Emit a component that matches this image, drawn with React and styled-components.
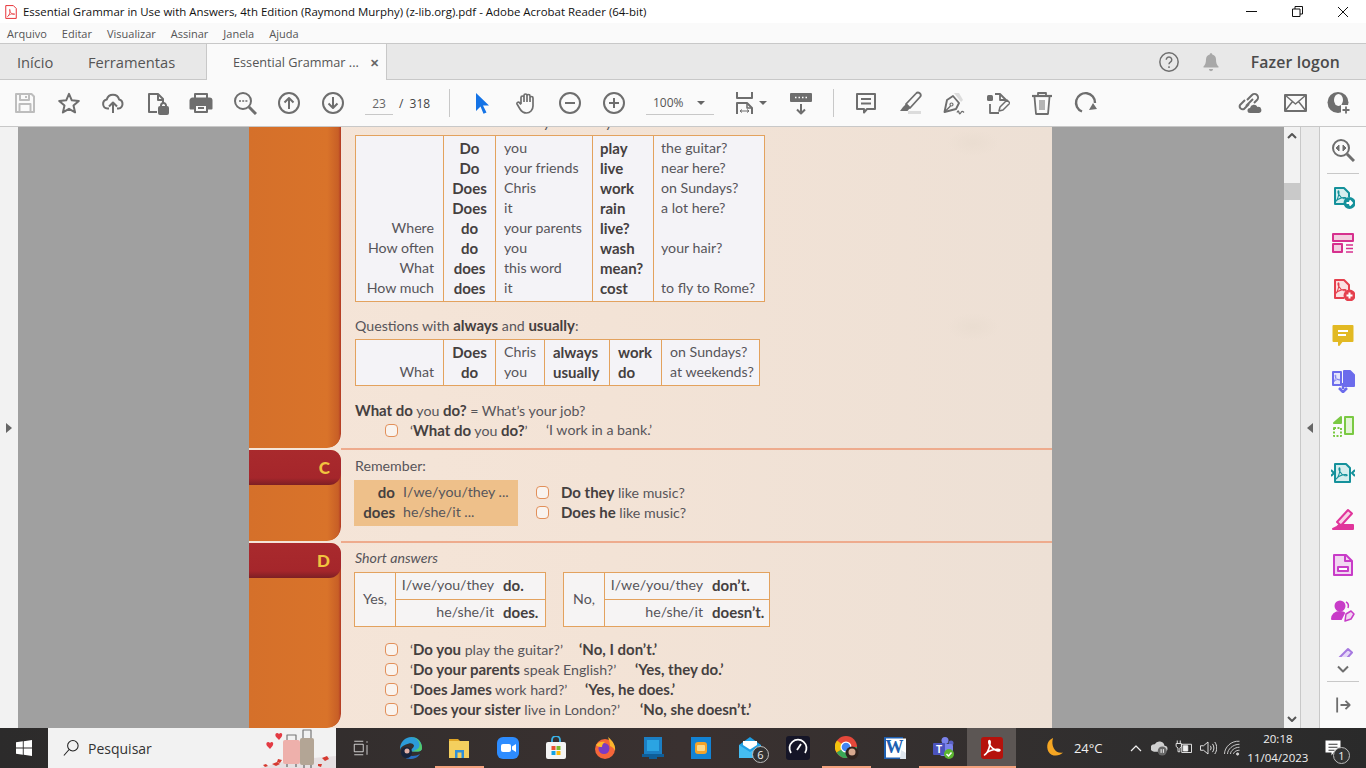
import styled, { createGlobalStyle } from 'styled-components';

const GlobalStyle = createGlobalStyle`
	html, body {
		margin: 0;
		height: 100%;
		overflow: hidden;
		font-family: 'Open Sans', 'Liberation Sans', sans-serif;
	}
`;

const Shell = styled.div`
	display: flex;
	flex-direction: column;
	width: 1366px;
	height: 768px;
	overflow: hidden;
`;

const Glyph = styled.svg.attrs((p) => ({
	viewBox: p.$box || '0 0 24 24',
	width: p.$size || 24,
	height: p.$h || p.$size || 24,
}))`
	display: block;
	flex: none;
	fill: none;
	stroke: ${(p) => p.$color || '#6e6e6e'};
	stroke-width: ${(p) => p.$sw ?? 2};
	stroke-linejoin: round;
	margin-left: ${(p) => p.$ml || 0}px;
`;

/* title + menu */
const TitleBar = styled.div`
	display: flex;
	align-items: center;
	height: 23px;
	background: #fff;
	padding-left: 4px;
	font-size: 11.45px;
	color: #111;
`;
const TitleText = styled.span`
	margin-left: 5px;
	flex: 1;
`;
const WinButton = styled.div`
	display: flex;
	align-items: center;
	justify-content: center;
	width: 46px;
`;
const MenuBar = styled.div`
	display: flex;
	align-items: center;
	gap: 15px;
	height: 20px;
	padding-left: 7px;
	background: #fafafa;
	border-bottom: 1px solid #c8c8c8;
	font-size: 11px;
	color: #555;
`;

/* tabs */
const TabBar = styled.div`
	display: flex;
	align-items: center;
	height: 35px;
	background: #e8e8e8;
	border-bottom: 1px solid #c8c8c8;
	color: #555;
	font-size: 14.7px;
`;
const TopTab = styled.div`
	box-sizing: border-box;
	width: ${(p) => p.$w}px;
	padding-left: ${(p) => p.$pad}px;
`;
const ActiveTab = styled.div`
	display: flex;
	align-items: center;
	justify-content: space-between;
	box-sizing: border-box;
	width: 181px;
	height: 36px;
	margin-bottom: -1px;
	padding: 0 7px 0 26px;
	background: #fafafa;
	border-left: 1px solid #c8c8c8;
	border-right: 1px solid #c8c8c8;
	font-size: 12.7px;
`;
const CloseX = styled.span`
	font-size: 11px;
	font-weight: 700;
	color: #666;
`;
const TabRight = styled.div`
	display: flex;
	align-items: center;
	margin-left: auto;
	padding-right: 26px;
`;
const Login = styled.span`
	margin-left: 30px;
	font-size: 15.8px;
	font-weight: 600;
	letter-spacing: 0.15px;
	color: #4b4b4b;
`;

/* toolbar */
const ToolBar = styled.div`
	display: flex;
	align-items: center;
	height: 46px;
	padding-left: 3px;
	background: #fafafa;
	border-bottom: 1px solid #c8c8c8;
`;
const Tool = styled.div`
	display: flex;
	align-items: center;
	justify-content: center;
	width: 44px;
	height: 46px;
	flex: none;
	margin-left: ${(p) => p.$ml || 0}px;
`;
const PageBox = styled.div`
	display: flex;
	align-items: center;
	width: 94px;
	padding-left: 10px;
	box-sizing: border-box;
	font-size: 12px;
	color: #444;
`;
const PageInput = styled.span`
	box-sizing: border-box;
	width: 28px;
	height: 24px;
	line-height: 25px;
	text-align: center;
	border-bottom: 1px solid #c8c8c8;
	color: #666;
`;
const PageTotal = styled.span`
	margin-left: 6px;
	word-spacing: 3px;
`;
const ToolSep = styled.div`
	width: 1px;
	height: 28px;
	background: #c8c8c8;
	margin: 0 10px 0 ${(p) => p.$l}px;
	flex: none;
`;
const ZoomSelect = styled.div`
	display: flex;
	align-items: center;
	justify-content: space-between;
	box-sizing: border-box;
	width: 68px;
	height: 24px;
	margin-left: 10px;
	padding: 0 9px 0 7px;
	border-bottom: 1px solid #c8c8c8;
	font-size: 12px;
	color: #555;
`;
const Caret = styled.i`
	width: 0;
	height: 0;
	border-left: 4px solid transparent;
	border-right: 4px solid transparent;
	border-top: 4px solid #666;
	margin-left: ${(p) => p.$ml || 0}px;
`;

/* viewer */
const Workspace = styled.div`
	display: flex;
	flex: 1;
	min-height: 0;
`;
const LeftStrip = styled.div`
	display: flex;
	align-items: center;
	justify-content: center;
	width: 18px;
	background: #f2f2f2;
	flex: none;
`;
const Arrow = styled.i`
	width: 0;
	height: 0;
	border-top: 5px solid transparent;
	border-bottom: 5px solid transparent;
	${(p) => (p.$left ? 'border-right: 6px solid #666;' : 'border-left: 6px solid #666;')}
`;
const Viewer = styled.div`
	width: 1266px;
	background: #a0a0a0;
	padding-left: 231px;
	box-sizing: border-box;
	flex: none;
`;
const Page = styled.div`
	width: 803px;
	height: 601px;
	overflow: hidden;
	font-family: Lato, 'Open Sans', sans-serif;
	font-size: 14.2px;
	line-height: 20px;
	color: #57555a;
	background:
		radial-gradient(26px 13px at 724px 16px, #eaddd1, transparent),
		radial-gradient(26px 14px at 724px 200px, #eaddd1, transparent),
		linear-gradient(90deg, #f5e5d8 0%, #f3e3d6 45%, #ede0d5 100%);
	b {
		font-size: 15px;
		font-weight: 700;
		color: #45403f;
	}
`;
const Section = styled.div`
	display: flex;
	height: ${(p) => p.$h}px;
`;
const sideFill = 'linear-gradient(90deg, #d5702a 0%, #d9732a 85%, #c85f26 97%, #b23a24 100%)';
const Side = styled.div`
	display: flex;
	flex-direction: column;
	width: 92px;
	flex: none;
	padding-top: ${(p) => (p.$tabbed ? 2 : 0)}px;
	box-sizing: border-box;
	border-radius: 0 0 14px 0;
	overflow: hidden;
`;
const SideFill = styled.div`
	flex: 1;
	background: ${sideFill};
	border-radius: 0 0 14px 0;
`;
const SideHead = styled.div`
	background: ${sideFill};
	border-radius: 0 11px 0 0;
`;
const SideTab = styled.div`
	display: flex;
	align-items: center;
	justify-content: flex-end;
	height: 35px;
	padding-right: 11px;
	box-sizing: border-box;
	background: linear-gradient(180deg, #a92a2d 0%, #a5262b 80%, #7d1f24 100%);
	border-radius: 0 10px 12px 0;
	font-size: 17px;
	font-weight: 900;
	color: #f1c33f;
`;
const Body = styled.div`
	flex: 1;
	padding: ${(p) => p.$top}px 0 0 14px;
	${(p) => p.$rule && 'border-top: 2px solid #eeab8d;'}
`;
const ClipLine = styled.div`
	position: relative;
	height: 8px;
	overflow: hidden;
`;
const Tail = styled.span`
	position: absolute;
	top: -14px;
	left: ${(p) => p.$x}px;
`;
const Table = styled.div`
	display: grid;
	grid-template-columns: ${(p) => p.$cols};
	width: max-content;
	margin-top: ${(p) => p.$mt || 0}px;
	background: #f4f3f7;
	border: 1px solid #e3a25e;
`;
const Col = styled.div`
	padding: 2px ${(p) => p.$pr || 0}px 3px ${(p) => p.$pl || 0}px;
	text-align: ${(p) => p.$align || 'left'};
	border-left: ${(p) => (p.$first ? 'none' : '1px solid #e3a25e')};
	font-weight: ${(p) => (p.$bold ? 700 : 400)};
	font-size: ${(p) => (p.$bold ? '15px' : 'inherit')};
	color: ${(p) => (p.$bold ? '#45403f' : '#57555a')};
`;
const Line = styled.div`
	height: 20px;
	white-space: nowrap;
	margin-top: ${(p) => p.$mt || 0}px;
`;
const Example = styled.div`
	display: flex;
	align-items: center;
	height: 20px;
	white-space: nowrap;
	padding-left: ${(p) => p.$indent || 0}px;
`;
const Check = styled.i`
	box-sizing: border-box;
	width: 13px;
	height: 13px;
	border: 1px solid #e2905a;
	border-radius: 4px;
	background: #f9f3ee;
	margin-right: 12px;
	flex: none;
`;
const Ask = styled.span`
	display: inline-block;
	width: ${(p) => p.$w}px;
	flex: none;
`;
const RememberRow = styled.div`
	display: flex;
	gap: 18px;
	margin: 4px 0 0 -1px;
`;
const Highlight = styled.div`
	display: grid;
	grid-template-columns: 41px auto;
	grid-auto-rows: 20px;
	column-gap: 8px;
	box-sizing: border-box;
	width: 164px;
	height: 46px;
	padding-top: 2px;
	background: #eec08a;
`;
const HighlightKey = styled.b`
	text-align: right;
`;
const CheckList = styled.div`
	padding-top: 2px;
`;
const AnswerRow = styled.div`
	display: flex;
	gap: 17px;
	margin: 4px 0 12px -1px;
`;
const AnswerBox = styled.div`
	display: flex;
	box-sizing: border-box;
	width: ${(p) => p.$w}px;
	height: 55px;
	background: #f6f4f4;
	border: 1px solid #e3a25e;
`;
const AnswerLabel = styled.div`
	display: flex;
	align-items: center;
	justify-content: center;
	width: 40px;
	padding-bottom: 2px;
	border-right: 1px solid #e3a25e;
	flex: none;
`;
const AnswerRows = styled.div`
	flex: 1;
	display: flex;
	flex-direction: column;
`;
const AnswerLine = styled.div`
	display: flex;
	align-items: center;
	flex: 1;
	padding-bottom: 2px;
	${(p) => p.$rule && 'border-top: 1px solid #e3a25e;'}
`;
const Pronoun = styled.span`
	width: 98px;
	text-align: right;
	margin-right: 9px;
`;

/* scroll + rail */
const ScrollBar = styled.div`
	display: flex;
	flex-direction: column;
	align-items: center;
	justify-content: space-between;
	position: relative;
	box-sizing: border-box;
	width: 17px;
	padding: 4px 0;
	background: #f2f2f2;
	border-right: 1px solid #c8c8c8;
	flex: none;
`;
const Thumb = styled.div`
	position: absolute;
	top: 56px;
	left: 0;
	width: 16px;
	height: 17px;
	background: #c9c9c9;
`;
const RightStrip = styled.div`
	display: flex;
	align-items: center;
	justify-content: center;
	box-sizing: border-box;
	width: 19px;
	background: #ebebeb;
	border-right: 1px solid #c8c8c8;
	flex: none;
`;
const Rail = styled.div`
	display: flex;
	flex-direction: column;
	flex: 1;
	background: #fafafa;
`;
const RailItem = styled.div`
	display: flex;
	align-items: center;
	justify-content: center;
	height: ${(p) => p.$h || 46}px;
	flex: none;
`;
const RailSep = styled.div`
	height: 1px;
	margin: 0 7px;
	background: #c8c8c8;
	flex: none;
`;
const RailList = styled.div`
	height: 483px;
	overflow: hidden;
	flex: none;
`;

/* taskbar */
const TaskBar = styled.div`
	display: flex;
	align-items: stretch;
	height: 40px;
	background: linear-gradient(90deg, #2c2b2b 0%, #3a3130 50%, #2f2e2e 85%, #2a2a2a 100%);
	color: #f0f0f0;
	flex: none;
`;
const StartButton = styled.div`
	display: flex;
	align-items: center;
	justify-content: center;
	width: 48px;
	flex: none;
`;
const SearchBox = styled.div`
	position: relative;
	display: flex;
	align-items: center;
	box-sizing: border-box;
	width: 288px;
	padding-left: 14px;
	background: #f2f2f2;
	font-size: 14px;
	color: #333;
	flex: none;
`;
const SearchLabel = styled.span`
	margin-left: 8px;
`;
const SearchArt = styled.div`
	position: absolute;
	right: 0;
	bottom: 0;
`;
const TaskCell = styled.div`
	position: relative;
	display: flex;
	align-items: center;
	justify-content: center;
	width: ${(p) => p.$w || 48.4}px;
	flex: none;
	background: ${(p) => (p.$active ? '#5c5654' : 'transparent')};
	${(p) => p.$open && 'box-shadow: inset 0 -2px 0 #f4a27e;'}
`;
const Badge = styled.span`
	position: absolute;
	right: ${(p) => p.$r || 5}px;
	bottom: ${(p) => p.$b || 5}px;
	display: flex;
	align-items: center;
	justify-content: center;
	box-sizing: border-box;
	width: 17px;
	height: 17px;
	border: 1px solid #bbb;
	border-radius: 50%;
	background: #333;
	font-size: 11px;
	color: #eee;
`;
const Weather = styled.div`
	display: flex;
	align-items: center;
	box-sizing: border-box;
	width: 108px;
	padding-left: 27px;
	gap: 9px;
	font-size: 13px;
	flex: none;
`;
const TrayIcon = styled.div`
	display: flex;
	align-items: center;
	justify-content: center;
	width: 24px;
	flex: none;
`;
const Clock = styled.div`
	display: flex;
	flex-direction: column;
	align-items: center;
	justify-content: center;
	width: 68px;
	font-size: 11.5px;
	line-height: 19px;
	flex: none;
`;

const Pdf = ({ color = '#e5404e', t = '' }) => (
	<path d="M6 19c2-1 3.6-5 4.4-9 .3-2 .1-3.5-.5-3.5s-.8 1.8.1 3.5 3.5 4.5 6 5.2c1.3.3 2.5.1 2.5-.6s-2.6-.9-5.2-.3-5.3 1.8-7.3 4.7z" stroke={color} strokeWidth="1.2" transform={t} />
);

const Star = () => <Glyph><path d="M12 2.8l2.8 6.5 7 .6-5.3 4.6 1.6 6.9-6.1-3.6-6.1 3.6 1.6-6.9-5.3-4.6 7-.6z" /></Glyph>;
const toolsLeft = [
	<Glyph $color="#bdbdbd"><path d="M3 3h15.5L21 5.5V21H3z" /><path d="M7 3v6h9V3M13 5v2M6.5 21v-8h11v8" /></Glyph>,
	<Star />,
	<Glyph><path d="M8 17.5H6.5a4.6 4.6 0 0 1-.7-9.1 6.4 6.4 0 0 1 12.3.1 4.6 4.6 0 0 1-.6 9H16" /><path d="M12 22v-10M8 15.5l4-4 4 4" /></Glyph>,
	<Glyph><path d="M12 21H4V3h9l5 5v4M13 3v6h5" /><rect x="14" y="16" width="9" height="7" rx="1" fill="#6e6e6e" /><path d="M16 16v-1.5a2.5 2.5 0 0 1 5 0V16" /></Glyph>,
	<Glyph><path d="M6 8V3h12v5" /><path d="M3.5 7.5h17a2 2 0 0 1 2 2v8H18V14H6v3.5H1.5v-8a2 2 0 0 1 2-2z" fill="#6e6e6e" /><path d="M6 14h12v7H6zM9 17h6" /></Glyph>,
	<Glyph><circle cx="10" cy="10" r="8" /><path d="M16 16l7 7" strokeWidth="3" /><path d="M6 10h2M9.2 10h2M12.4 10h2" strokeWidth="1.5" /></Glyph>,
	<Glyph><circle cx="12" cy="12" r="10" /><path d="M12 18V7M7.5 11.5L12 7l4.5 4.5" /></Glyph>,
	<Glyph><circle cx="12" cy="12" r="10" /><path d="M12 6v11M7.5 12.5L12 17l4.5-4.5" /></Glyph>,
];

const railIcons = [
	<Glyph $color="#14919b"><path d="M15 19H4V3h9l5 5v4" fill="#d6eeee" /><Pdf color="#14919b" t="translate(-1.5 0) scale(.9)" /><circle cx="18.5" cy="18" r="5" fill="#14919b" /><path d="M15.5 18h5M18.5 15.5l2.5 2.5-2.5 2.5" stroke="#fff" /></Glyph>,
	<Glyph $color="#d6308e"><rect x="2" y="3" width="20" height="7" fill="#f3cfe0" /><rect x="2" y="13" width="9" height="8" fill="#f3cfe0" /><path d="M15 14h7M15 17.5h7M15 21h7" strokeWidth="1.5" /></Glyph>,
	<Glyph $color="#e5404e"><path d="M13 21H4V3h9l5 5v5" fill="#fbe0e2" /><Pdf color="#e5404e" t="translate(-1.5 0) scale(.9)" /><circle cx="18.5" cy="18.5" r="5" fill="#e5404e" /><path d="M15.5 18.5h6M18.5 15.5v6" stroke="#fff" /></Glyph>,
	<Glyph $color="#e2b923"><path d="M2.5 3h19v15H11l-3 4v-4H2.5z" fill="#e2b923" /><path d="M7 8h10M7 12h8" stroke="#fff" /></Glyph>,
	<Glyph $color="#6c6cec"><path d="M10 3H2v13h8z" fill="#e6e6fb" /><Pdf color="#6c6cec" t="translate(-1.5 2) scale(.6)" /><path d="M13 2h6l4 4v11H13z" fill="#6c6cec" /><path d="M12 14v6M8 19l4 4 4-4" strokeWidth="2.5" /></Glyph>,
	<Glyph $color="#7ac943"><path d="M14 2h8v17h-8z" fill="#e3f5d6" /><path d="M3 13h7v8H3z" strokeDasharray="2 1.5" /><path d="M10 2L3 8h7z" fill="#7ac943" /></Glyph>,
	<Glyph $color="#14919b"><path d="M4 3h11l4 4v14H4z" fill="#d6eeee" /><Pdf color="#14919b" t="translate(-.5 1) scale(.9)" /><path d="M0 9l3 3-3 3M24 9l-3 3 3 3" /></Glyph>,
	<Glyph $color="#e0359b"><path d="M6 15L17 3l4 3.5L10 18.5z" fill="#f8d3e6" /><path d="M2 22l4-2 2-2h14v4z" fill="#e0359b" /></Glyph>,
	<Glyph $color="#c83cc8"><path d="M3 2h12l6 6v14H3z" fill="#f1d6f1" /><path d="M7 14h10v4H7z" fill="#fff" /><path d="M14 2v6h7" /></Glyph>,
	<Glyph $color="#c83cc8"><circle cx="9" cy="7" r="4.5" fill="#c83cc8" /><path d="M1 20c0-4 3-7 8-7 2 0 3 .5 4 1l-3 6z" fill="#c83cc8" /><path d="M14 22l1-7 5-3 3 3-3 5z" fill="#f1d6f1" strokeWidth="1.5" /><path d="M15 3c2 1 3 3 2 6" strokeWidth="1.5" /></Glyph>,
	<Glyph $color="#a679e0"><path d="M5 16L17 4l4 3.5L10 20z" fill="#e6d8f8" /></Glyph>,
];

const tasks = [
	{ key: 'edge', icon: <Glyph $sw={0}><path d="M1 13C1 6 6 1 12.5 1 18.5 1 23 5.5 23 12c0 2-1.5 3.5-4 3.5h-7c0-3 3-3.5 3-6-1-2-3-2.5-5-2-4 1-9 3-9 7.5z" fill="#2c9cd8" /><path d="M23 12C23 6 18 1 12.5 1c5 1 8 4 8 8 0 3-2 5-8.5 6.5h7c2.5 0 4-1.5 4-3.5z" fill="#52cc6c" /><path d="M7 22.5c6 1.5 12-.5 14-4.5-3 2-8 2.5-11 1.5z" fill="#2a6fc0" /><circle cx="7.5" cy="16.5" r="5.5" fill="#18233a" /><circle cx="8" cy="15" r="2.5" fill="#e0b0a6" /></Glyph> },
	{ key: 'files', open: true, icon: <Glyph $sw={0}><path d="M2 3h9l2 2H2z" fill="#e0a526" /><rect x="2" y="5" width="20" height="17" fill="#f4cf5e" /><rect x="8" y="14" width="9" height="8" fill="#2f8fd8" /><rect x="10.5" y="16.5" width="4" height="5.5" fill="#f4cf5e" /></Glyph> },
	{ key: 'zoom', icon: <Glyph $sw={0}><rect x="1" y="1" width="22" height="22" rx="6" fill="#2d8cff" /><rect x="5" y="8" width="10" height="8" rx="2" fill="#fff" /><path d="M16 10.5L20 8v8l-4-2.5z" fill="#fff" /></Glyph> },
	{ key: 'store', icon: <Glyph $sw={0}><path d="M8 6V4a4 4 0 0 1 8 0v2" stroke="#39b1e6" strokeWidth="1.8" /><rect x="2" y="6" width="20" height="17" rx="2" fill="#f4f4f4" /><rect x="7.5" y="10" width="4" height="4" fill="#e8512f" /><rect x="12.5" y="10" width="4" height="4" fill="#7cbb2d" /><rect x="7.5" y="15" width="4" height="4" fill="#12a3e6" /><rect x="12.5" y="15" width="4" height="4" fill="#f9b90c" /></Glyph> },
	{ key: 'firefox', icon: <Glyph $sw={0}><circle cx="12" cy="13" r="10" fill="#f5663a" /><path d="M15 1c5 4 8 9 7 14-1-3-3-4-5-5 0-3-1-6-2-9z" fill="#fbb62d" /><circle cx="11" cy="12.5" r="5.5" fill="#7b3bc4" /><path d="M3 9c2-3 6-4 9-3-2 1-3 3-3 5-2 0-4 0-6-2z" fill="#fbb62d" /></Glyph> },
	{ key: 'tablet', icon: <Glyph $sw={0}><rect x="3" y="1" width="18" height="19" fill="#1b7fc4" /><rect x="6" y="4" width="12" height="11" fill="#2ba4e2" /><rect x="1" y="18" width="22" height="3" fill="#0f5e99" /><rect x="8" y="21" width="8" height="2" fill="#0f5e99" /></Glyph> },
	{ key: 'notes', icon: <Glyph $sw={0}><rect x="2" y="1" width="20" height="22" fill="#1383d4" /><rect x="6" y="6" width="12" height="12" rx="3" fill="#f2a32a" /><rect x="8" y="9" width="8" height="6" rx="1" fill="#fbd98b" /></Glyph> },
	{ key: 'mail', badge: '6', icon: <Glyph $sw={0}><path d="M1 9l11-8 11 8v13H1z" fill="#1f9fe4" /><path d="M1 9l11 7 11-7v13H1z" fill="#45bdf2" /><path d="M5 9V5h14v4l-7 4.5z" fill="#fff" /></Glyph> },
	{ key: 'gauge', icon: <Glyph $sw={0}><rect x="0" y="0" width="24" height="24" rx="3" fill="#151527" /><path d="M5 17a8.5 8.5 0 1 1 14 0" stroke="#fff" strokeWidth="1.8" /><path d="M11 14l4-6" stroke="#fff" strokeWidth="1.8" /></Glyph> },
	{ key: 'chrome', open: true, icon: <Glyph $sw={0}><circle cx="11" cy="11" r="11" fill="#e5483a" /><path d="M11 11L1.5 16.5A11 11 0 0 1 2 4.5z" fill="#f4c20d" /><path d="M11 11l-9.5 5.5A11 11 0 0 0 22 11z" fill="#3aa757" /><circle cx="11" cy="11" r="5.5" fill="#fff" /><circle cx="11" cy="11" r="4.3" fill="#4285f4" /><circle cx="17" cy="17" r="6.5" fill="#30241f" /><circle cx="17" cy="16" r="3.5" fill="#d8a98f" /></Glyph> },
	{ key: 'word', icon: <Glyph $sw={0}><rect x="1" y="1" width="19" height="22" fill="#1e5fb0" /><rect x="3" y="2.5" width="20" height="19" fill="#fff" /><text x="2.5" y="17" fontFamily="Liberation Serif, serif" fontWeight="700" fontSize="18" fill="#1e5fb0">W</text><path d="M18 14l5 3v6h-6z" fill="#dfe6ee" /></Glyph> },
	{ key: 'teams', open: true, icon: <Glyph $sw={0}><circle cx="14" cy="4.5" r="3.5" fill="#7b83eb" /><circle cx="20" cy="7" r="2.5" fill="#5b62c4" /><rect x="9" y="8" width="13" height="12" rx="2" fill="#7b83eb" /><rect x="2" y="7" width="12" height="12" rx="1" fill="#4b53bc" /><text x="5" y="16.5" fontFamily="Liberation Sans, sans-serif" fontWeight="700" fontSize="10" fill="#fff">T</text><circle cx="18" cy="18" r="5" fill="#5cb531" /><path d="M15.5 18l2 2 3-3.5" stroke="#fff" strokeWidth="1.5" /></Glyph> },
	{ key: 'acrobat', open: true, active: true, icon: <Glyph $sw={0}><rect x="1" y="1" width="22" height="22" rx="3" fill="#b5120c" /><path d="M4.5 19c2.5-1.2 4.5-6 5.5-11 .3-2 .1-3.5-.6-3.5s-1 2 .1 4 4.5 5.5 7.5 6.3c1.7.4 3 .1 3-.7s-3.3-1.1-6.5-.4-6.5 2.2-9 5.3z" stroke="#fff" strokeWidth="1.6" /></Glyph> },
];

const table1 = [
	{ w: '87px', align: 'right', pr: 9, rows: ['', '', '', '', 'Where', 'How often', 'What', 'How much'] },
	{ w: '52px', align: 'center', bold: true, rows: ['Do', 'Do', 'Does', 'Does', 'do', 'do', 'does', 'does'] },
	{ w: '97px', pl: 8, rows: ['you', 'your friends', 'Chris', 'it', 'your parents', 'you', 'this word', 'it'] },
	{ w: '61px', pl: 7, bold: true, rows: ['play', 'live', 'work', 'rain', 'live?', 'wash', 'mean?', 'cost'] },
	{ w: '111px', pl: 7, rows: ['the guitar?', 'near here?', 'on Sundays?', 'a lot here?', '', 'your hair?', '', 'to fly to Rome?'] },
];
const table2 = [
	{ w: '87px', align: 'right', pr: 9, rows: ['', 'What'] },
	{ w: '52px', align: 'center', bold: true, rows: ['Does', 'do'] },
	{ w: '49px', pl: 8, rows: ['Chris', 'you'] },
	{ w: '65px', pl: 8, bold: true, rows: ['always', 'usually'] },
	{ w: '52px', pl: 8, bold: true, rows: ['work', 'do'] },
	{ w: '98px', pl: 8, rows: ['on Sundays?', 'at weekends?'] },
];

const GridTable = ({ cols, mt }) => (
	<Table $cols={cols.map((c) => c.w).join(' ')} $mt={mt}>
		{cols.map((c, i) => (
			<Col key={i} $first={i === 0} $align={c.align} $pl={c.pl} $pr={c.pr} $bold={c.bold}>
				{c.rows.map((r, j) => (
					<Line key={j}>{r}</Line>
				))}
			</Col>
		))}
	</Table>
);

const shortAnswers = [
	{ w: 169, q: <><b>Do you</b> play the guitar?’</>, a: 'No, I don’t.' },
	{ w: 225, q: <><b>Do your parents</b> speak English?’</>, a: 'Yes, they do.' },
	{ w: 175, q: <><b>Does James</b> work hard?’</>, a: 'Yes, he does.' },
	{ w: 230, q: <><b>Does your sister</b> live in London?’</>, a: 'No, she doesn’t.' },
];

const App = () => (
	<Shell>
		<GlobalStyle />
		<TitleBar>
			<Glyph $size={14} $color="#e5252a" $sw={1.6}>
				<path d="M3 1h13l5 5v17H3z" />
				<Pdf color="#e5252a" t="translate(0 1)" />
			</Glyph>
			<TitleText>Essential Grammar in Use with Answers, 4th Edition (Raymond Murphy) (z-lib.org).pdf - Adobe Acrobat Reader (64-bit)</TitleText>
			<WinButton><Glyph $size={11} $color="#111" $sw={1} $box="0 0 11 11"><path d="M0 5.5h11" /></Glyph></WinButton>
			<WinButton><Glyph $size={11} $color="#111" $sw={1} $box="0 0 11 11"><path d="M.5 3H8v7.5H.5zM3 3V.5h7.5V8H8" /></Glyph></WinButton>
			<WinButton><Glyph $size={12} $color="#111" $sw={1} $box="0 0 12 12"><path d="M1 1l10 10M11 1L1 11" /></Glyph></WinButton>
		</TitleBar>
		<MenuBar>
			<span>Arquivo</span>
			<span>Editar</span>
			<span>Visualizar</span>
			<span>Assinar</span>
			<span>Janela</span>
			<span>Ajuda</span>
		</MenuBar>
		<TabBar>
			<TopTab $w={71} $pad={17}>Início</TopTab>
			<TopTab $w={135} $pad={17}>Ferramentas</TopTab>
			<ActiveTab>
				<span>Essential Grammar ...</span>
				<CloseX>✕</CloseX>
			</ActiveTab>
			<TabRight>
				<Glyph $size={22} $sw={1.6}>
					<circle cx="12" cy="12" r="10" />
					<path d="M9 9.5a3 3 0 1 1 4.5 2.6c-1 .6-1.500 1.100-1.500 2.400M12 16.500v2" />
				</Glyph>
				<Glyph $size={20} $color="#a8a8a8" $sw={0} $ml={21}>
					<path d="M12 1.5c1 0 1.5.7 1.5 1.5 3 .8 4.5 3 4.5 6 0 4 1 6.5 3 8.5v1H3v-1c2-2 3-4.5 3-8.5 0-3 1.5-5.2 4.5-6 0-.8.5-1.5 1.5-1.5zM9.5 20.5h5a2.5 2.5 0 0 1-5 0z" fill="#a8a8a8" />
				</Glyph>
				<Login>Fazer logon</Login>
			</TabRight>
		</TabBar>
		<ToolBar>
			{toolsLeft.map((icon, i) => (
				<Tool key={i}>{icon}</Tool>
			))}
			<PageBox>
				<PageInput>23</PageInput>
				<PageTotal>/ 318</PageTotal>
			</PageBox>
			<ToolSep $l={0} />
			<Tool>
				<Glyph $color="#1473e6" $sw={0}>
					<path d="M6 2l13 12.5h-6l3.5 7-3 1.3-3-7.3L6 20z" fill="#1473e6" />
				</Glyph>
			</Tool>
			<Tool>
				<Glyph>
					<path d="M7 13V6.5a1.5 1.5 0 0 1 3 0V11M10 11V4.500a1.500 1.500 0 0 1 3 0V11M13 11V5a1.500 1.500 0 0 1 3 0v6M16 11V7a1.500 1.500 0 0 1 3 0v8c0 4-3 7-6.500 7S7.500 20.500 6 18l-3-5c-.7-1.300 1.300-2.600 2.500-1.300L7 13.500" strokeWidth="1.7" />
				</Glyph>
			</Tool>
			<Tool><Glyph><circle cx="12" cy="12" r="10" /><path d="M7 12h10" /></Glyph></Tool>
			<Tool><Glyph><circle cx="12" cy="12" r="10" /><path d="M7 12h10M12 7v10" /></Glyph></Tool>
			<ZoomSelect>
				<span>100%</span>
				<Caret />
			</ZoomSelect>
			<Tool $ml={14}>
				<Glyph>
					<path d="M4 1v6h15V1M4 23V12h10l5 5v6" />
					<path d="M7 20h9M7 20l2-1.5M7 20l2 1.5M16 20l-2-1.5M16 20l-2 1.5" strokeWidth="1" />
					<path d="M14 12v5h5" strokeWidth="1.5" />
				</Glyph>
				<Caret $ml={2} />
			</Tool>
			<Tool $ml={7}>
				<Glyph>
					<rect x="2" y="3" width="20" height="7" fill="#6e6e6e" />
					<path d="M6 6.5h1.5M9.5 6.5H11M13 6.5h1.5M16.5 6.500H18" stroke="#fff" strokeWidth="1.5" />
					<path d="M12 13v9M8 18.500l4 4 4-4" />
				</Glyph>
			</Tool>
			<ToolSep $l={10} />
			<Tool>
				<Glyph><path d="M3 3h18v15h-8l-3 3.500V18H3z" /><path d="M7 8h10M7 12.500h10" /></Glyph>
			</Tool>
			<Tool>
				<Glyph>
					<path d="M8 13L18 2.500a2.600 2.600 0 0 1 4 3.500L12 17z" strokeWidth="1.8" />
					<path d="M8 13l4 4-2.500 3H2l3-4z" fill="#6e6e6e" stroke="none" />
					<rect x="10" y="20" width="13" height="3" fill="#dcdcdc" stroke="none" />
				</Glyph>
			</Tool>
			<Tool>
				<Glyph>
					<path d="M11 5L5 9 2.500 21 14 18l3-6z" strokeWidth="1.900" />
					<path d="M2.500 21l6-6" strokeWidth="1.500" />
					<circle cx="9.500" cy="13.500" r="1.500" strokeWidth="1.200" />
					<path d="M12 2l7 9 2-2-4-7z" fill="#dcdcdc" stroke="none" />
					<path d="M15 21.500c1-2 1.500-2 2 0s1 1.500 2 0 1.500-1.500 3 0" strokeWidth="1.300" />
				</Glyph>
			</Tool>
			<Tool>
				<Glyph>
					<path d="M9 3h5l6 6v1M14 3v6h5M4 13v9h9" strokeWidth="1.800" />
					<rect x="1" y="4" width="6" height="6" rx="1.500" fill="#6e6e6e" stroke="none" />
					<path d="M13 20l1-4 7-7 3 3-7 7z" strokeWidth="1.500" />
				</Glyph>
			</Tool>
			<Tool>
				<Glyph>
					<path d="M2 5h20" strokeWidth="2.200" />
					<path d="M8 5V2h8v3M4.500 6L6 23h12l1.500-17" strokeWidth="1.800" />
					<path d="M10 9v10M12 9v10M14 9v10" strokeWidth="1" />
				</Glyph>
			</Tool>
			<Tool>
				<Glyph>
					<path d="M8 20.500A9.500 9.500 0 1 1 21 12" strokeWidth="2.400" />
					<path d="M15 19l8-1-4-6z" fill="#6e6e6e" stroke="none" />
				</Glyph>
			</Tool>
			<Tool $ml={120}>
				<Glyph>
					<path d="M9 9l5-5a3.500 3.500 0 0 1 5 5l-3 3M11 13l-5 5a3 3 0 0 1-4-4l5-5M8 15l7-7" />
					<path d="M12 22a2.500 2.500 0 0 1 0-5 4 4 0 0 1 7.500-1 3 3 0 0 1 1.500 6z" fill="#6e6e6e" stroke="none" />
				</Glyph>
			</Tool>
			<Tool $ml={1}>
				<Glyph><rect x="2" y="4" width="21" height="16" /><path d="M2 4l10.500 9L23 4M2 20l7.500-9.500M23 20l-7.500-9.500" strokeWidth="1.500" /></Glyph>
			</Tool>
			<Tool>
				<Glyph $sw={0}>
					<circle cx="11" cy="11.500" r="10.500" fill="#6e6e6e" />
					<ellipse cx="11.500" cy="9" rx="4.500" ry="6" fill="#fafafa" />
					<rect x="14" y="14" width="10" height="10" fill="#fafafa" />
					<path d="M19 15.500v7M15.500 19h7" stroke="#6e6e6e" strokeWidth="1.800" />
				</Glyph>
			</Tool>
		</ToolBar>
		<Workspace>
			<LeftStrip><Arrow /></LeftStrip>
			<Viewer>
				<Page>
					<Section $h={321}>
						<Side><SideFill /></Side>
						<Body $top={0}>
							<ClipLine>
								<Tail $x={188}>y</Tail>
								<Tail $x={250}>y</Tail>
							</ClipLine>
							<GridTable cols={table1} />
							<Line $mt={13}>Questions with <b>always</b> and <b>usually</b>:</Line>
							<GridTable cols={table2} mt={4} />
							<Line $mt={14}><b>What do</b> you <b>do?</b> = What’s your job?</Line>
							<Example $indent={30}>
								<Check />
								<Ask $w={136}>‘<b>What do</b> you <b>do?</b>’</Ask>
								<span>‘I work in a bank.’</span>
							</Example>
						</Body>
					</Section>
					<Section $h={93}>
						<Side $tabbed>
							<SideHead><SideTab>C</SideTab></SideHead>
							<SideFill />
						</Side>
						<Body $top={6} $rule>
							<Line>Remember:</Line>
							<RememberRow>
								<Highlight>
									<HighlightKey>do</HighlightKey>
									<span>I/we/you/they ...</span>
									<HighlightKey>does</HighlightKey>
									<span>he/she/it ...</span>
								</Highlight>
								<CheckList>
									<Example><Check /><span><b>Do they</b> like music?</span></Example>
									<Example><Check /><span><b>Does he</b> like music?</span></Example>
								</CheckList>
							</RememberRow>
						</Body>
					</Section>
					<Section $h={187}>
						<Side $tabbed>
							<SideHead><SideTab>D</SideTab></SideHead>
							<SideFill />
						</Side>
						<Body $top={5} $rule>
							<Line><em>Short answers</em></Line>
							<AnswerRow>
								<AnswerBox $w={192}>
									<AnswerLabel>Yes,</AnswerLabel>
									<AnswerRows>
										<AnswerLine><Pronoun>I/we/you/they</Pronoun><b>do.</b></AnswerLine>
										<AnswerLine $rule><Pronoun>he/she/it</Pronoun><b>does.</b></AnswerLine>
									</AnswerRows>
								</AnswerBox>
								<AnswerBox $w={207}>
									<AnswerLabel>No,</AnswerLabel>
									<AnswerRows>
										<AnswerLine><Pronoun>I/we/you/they</Pronoun><b>don’t.</b></AnswerLine>
										<AnswerLine $rule><Pronoun>he/she/it</Pronoun><b>doesn’t.</b></AnswerLine>
									</AnswerRows>
								</AnswerBox>
							</AnswerRow>
							{shortAnswers.map((s) => (
								<Example key={s.a} $indent={30}>
									<Check />
									<Ask $w={s.w}>‘{s.q}</Ask>
									<b>‘{s.a}’</b>
								</Example>
							))}
						</Body>
					</Section>
				</Page>
			</Viewer>
			<ScrollBar>
				<Glyph $size={10} $color="#555" $box="0 0 10 10"><path d="M1 7l4-4 4 4" /></Glyph>
				<Thumb />
				<Glyph $size={10} $color="#555" $box="0 0 10 10"><path d="M1 3l4 4 4-4" /></Glyph>
			</ScrollBar>
			<RightStrip><Arrow $left /></RightStrip>
			<Rail>
				<RailItem>
					<Glyph>
						<circle cx="10" cy="10" r="8" />
						<path d="M16 16l7 7" strokeWidth="3" />
						<path d="M8 7l-3 3 3 3zM12 7l3 3-3 3z" fill="#6e6e6e" strokeWidth="1" />
					</Glyph>
				</RailItem>
				<RailSep />
				<RailList>
					{railIcons.map((icon, i) => (
						<RailItem key={i}>{icon}</RailItem>
					))}
				</RailList>
				<RailItem $h={24}>
					<Glyph $size={12} $box="0 0 12 12"><path d="M1 3.5l5 5 5-5" /></Glyph>
				</RailItem>
				<RailSep />
				<RailItem>
					<Glyph $size={20} $sw={2.2}><path d="M5 3v18" /><path d="M9 12h11M15 7l5 5-5 5" /></Glyph>
				</RailItem>
			</Rail>
		</Workspace>
		<TaskBar>
			<StartButton>
				<Glyph $size={16} $sw={0} $box="0 0 16 16">
					<path d="M0 2.3l6.8-1v6.3H0zM7.7 1.2L16 0v7.6H7.7zM0 8.4h6.8v6.3l-6.8-1zM7.7 8.4H16V16l-8.300-1.200z" fill="#fff" />
				</Glyph>
			</StartButton>
			<SearchBox>
				<Glyph $size={18} $color="#222" $sw={1.4}>
					<circle cx="14.5" cy="9" r="7" />
					<path d="M9.5 14l-7 8" />
				</Glyph>
				<SearchLabel>Pesquisar</SearchLabel>
				<SearchArt>
					<Glyph $size={76} $h={40} $sw={0} $box="0 0 76 40">
						<path d="M0 40l30-8 46-4v12z" fill="#e6e0e2" />
						<path d="M19 6c1.500-2 4-1 3 2-.5 1.500-2 2.500-3 4-1-1.500-3-2.500-3.500-4-.8-3 2-4 3.500-2zM10 15c1.500-2 4-1 3 2-.5 1.500-2 2.500-3 4-1-1.500-3-2.500-3.500-4-.8-3 2-4 3.500-2z" fill="#e33b44" />
						<path d="M27 12V7h9v5M43 10V2h8v8" stroke="#777" strokeWidth="1.2" />
						<rect x="23" y="12" width="17" height="24" rx="2" fill="#eeb0ab" />
						<rect x="40" y="10" width="14" height="27" rx="2" fill="#b3a595" />
						<path d="M27 36v3M36 36v3M44 37v3M51 37v3" stroke="#666" strokeWidth="1.2" />
						<path d="M12 36l5-2 3 2-4 2zM18 31l4 1-2 3-3-1zM62 30l5-2 2 3-4 2zM58 36h4l-1 3-3-1zM3 37l3-1 2 2-3 1z" fill="#d63a30" />
					</Glyph>
				</SearchArt>
			</SearchBox>
			<TaskCell $w={50.8}>
				<Glyph $size={18} $color="#fff" $sw={1}>
					<path d="M3 3h12M3 21h12M3 7h12v10H3zM20 3v2M20 8v13" />
				</Glyph>
			</TaskCell>
			{tasks.map((t) => (
				<TaskCell key={t.key} $open={t.open} $active={t.active}>
					{t.icon}
					{t.badge && <Badge>{t.badge}</Badge>}
				</TaskCell>
			))}
			<Weather>
				<Glyph $size={22} $sw={0}>
					<path d="M11 1c-6 2-8 9-5 15 3 5 11 6 16 1-8 2-14-7-11-16z" fill="#f5a623" />
				</Glyph>
				<span>24°C</span>
			</Weather>
			<TrayIcon><Glyph $size={14} $color="#f0f0f0" $sw={1.2} $box="0 0 14 14"><path d="M2 10l5-5 5 5" /></Glyph></TrayIcon>
			<TrayIcon>
				<Glyph $size={18} $sw={0}>
					<path d="M4 17a5 5 0 0 1 1-10 7 7 0 0 1 13 2 4 4 0 0 1 0 8z" fill="#cfcfcf" />
					<circle cx="15" cy="16" r="6" fill="#666" />
					<path d="M13.5 13.5v5M16.5 13.5v5" stroke="#fff" strokeWidth="1.2" />
				</Glyph>
			</TrayIcon>
			<TrayIcon>
				<Glyph $size={18} $color="#f0f0f0" $sw={1.2}>
					<path d="M9 7h13v11H9z" /><path d="M3 2v4M7 2v4M1.5 6h7v4l-2 2v5H4v-5l-2.5-2z" /><path d="M11 9h6v7h-6z" fill="#f0f0f0" />
				</Glyph>
			</TrayIcon>
			<TrayIcon>
				<Glyph $size={18} $color="#f0f0f0" $sw={1.2}>
					<path d="M2 9v6h4l6 5V4L6 9zM15 9c1.5 2 1.5 4 0 6M18 6.5c2.5 3.5 2.5 7.5 0 11M21 4c3.5 5 3.5 11 0 16" />
				</Glyph>
			</TrayIcon>
			<TrayIcon>
				<Glyph $size={18} $color="#d8d8d8" $sw={1.2}>
					<path d="M2 20C2 11 11 2 22 3M6 20c0-6 7-13 16-13M10 20c0-4 5-9 12-9M14 20c0-2 3-5 8-5" />
					<circle cx="19.5" cy="20" r="1.5" fill="#d8d8d8" />
				</Glyph>
			</TrayIcon>
			<Clock>
				<span>20:18</span>
				<span>11/04/2023</span>
			</Clock>
			<TaskCell $w={42}>
				<Glyph $size={18} $color="#fff" $sw={0}>
					<path d="M2 2h20v16h-9l-3 4v-4H2z" fill="#fff" />
					<path d="M6 7h12M6 11h12M6 15h8" stroke="#333" strokeWidth="1.3" />
				</Glyph>
				<Badge $r={4} $b={4}>1</Badge>
			</TaskCell>
		</TaskBar>
	</Shell>
);

export default App;
